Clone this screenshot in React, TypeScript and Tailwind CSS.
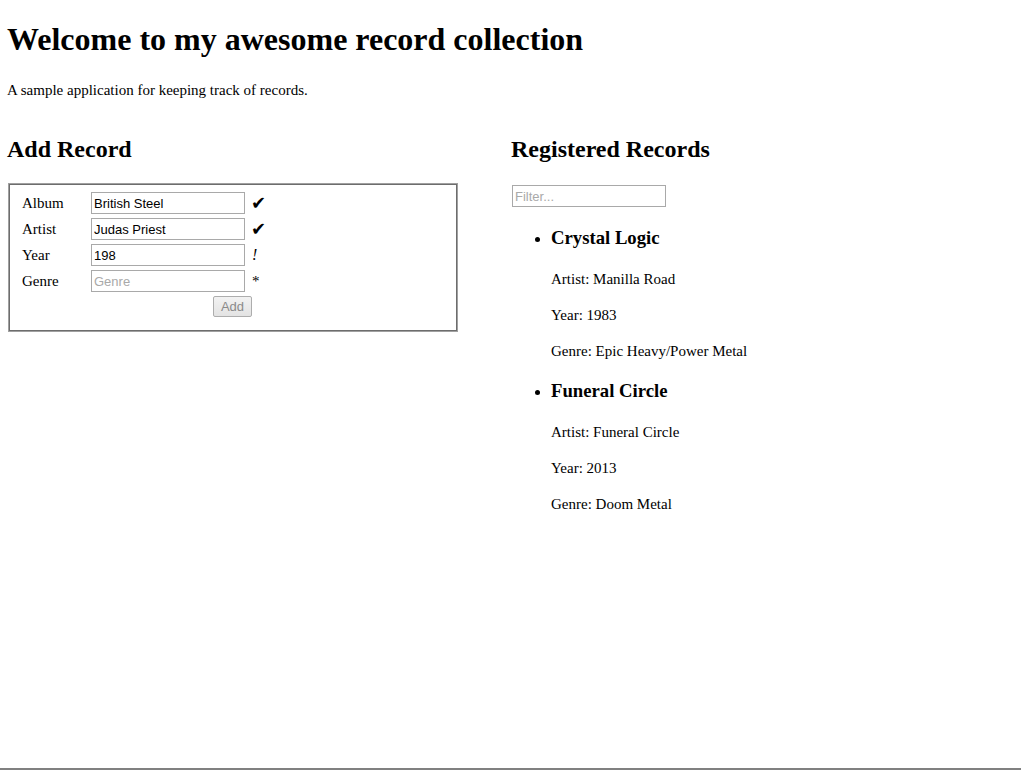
import { useState } from "react";

type RecordType = {
  album: string;
  artist: string;
  year: number;
  genre: string;
};

const records: RecordType[] = [
  { album: "Crystal Logic", artist: "Manilla Road", year: 1983, genre: "Epic Heavy/Power Metal" },
  { album: "Funeral Circle", artist: "Funeral Circle", year: 2013, genre: "Doom Metal" },
];

const inputClass =
  "w-[154px] h-[22px] border border-[#a9a9a9] bg-white px-[2px] font-['Liberation_Sans',Arial,sans-serif] text-[13px] text-black placeholder:text-[#a9a9a9] outline-none";

const App = () => {
  const [album, setAlbum] = useState("British Steel");
  const [artist, setArtist] = useState("Judas Priest");
  const [year, setYear] = useState("198");
  const [genre, setGenre] = useState("");
  const [filter, setFilter] = useState("");

  const shown = records.filter((r) =>
    r.album.toLowerCase().includes(filter.toLowerCase())
  );

  return (
    <div className="h-screen overflow-hidden border-b-2 border-[#808080] bg-white pl-[7px] pt-[21px] font-['Liberation_Serif','Times_New_Roman',serif] text-black">
      <h1 className="text-[32px] leading-[37px] font-bold">
        Welcome to my awesome record collection
      </h1>
      <p className="mt-[23px] text-[15px] leading-[18px]">
        A sample application for keeping track of records.
      </p>

      <div className="mt-[36px] grid grid-cols-[504px_1fr]">
        {/* Add record */}
        <div>
          <h2 className="text-[24px] leading-[28px] font-bold">Add Record</h2>
          <div className="mt-[20px] ml-[1px] w-[450px] border border-[#a0a0a0] pt-[8px] pb-[14px] pl-[13px] shadow-[inset_0_0_0_1px_#6d6d6d]">
            <div className="grid grid-cols-[69px_154px_auto] items-center gap-y-[4px] text-[15px] leading-[18px]">
              <span>Album</span>
              <input className={inputClass} value={album} onChange={(e) => setAlbum(e.target.value)} placeholder="Album" />
              <span className="pl-[6px] font-['DejaVu_Sans',sans-serif] text-[18px] leading-[18px]">✔</span>

              <span>Artist</span>
              <input className={inputClass} value={artist} onChange={(e) => setArtist(e.target.value)} placeholder="Artist" />
              <span className="pl-[6px] font-['DejaVu_Sans',sans-serif] text-[18px] leading-[18px]">✔</span>

              <span>Year</span>
              <input className={inputClass} value={year} onChange={(e) => setYear(e.target.value)} placeholder="Year" />
              <span className="pl-[7px] text-[16px] italic">!</span>

              <span>Genre</span>
              <input className={inputClass} value={genre} onChange={(e) => setGenre(e.target.value)} placeholder="Genre" />
              <span className="pl-[7px] text-[15px]">*</span>
            </div>
            <div className="mt-[4px] flex pl-[191px]">
              <button
                type="button"
                disabled
                className="h-[21px] w-[39px] rounded-[2px] border border-[#adadad] bg-linear-to-b from-[#f2f2f2] to-[#e3e3e3] font-['Liberation_Sans',Arial,sans-serif] text-[13px] leading-none text-[#8a8a8a]"
              >
                Add
              </button>
            </div>
          </div>
        </div>

        {/* Registered records */}
        <div>
          <h2 className="text-[24px] leading-[28px] font-bold">Registered Records</h2>
          <input
            className={`mt-[22px] ml-[1px] block ${inputClass}`}
            value={filter}
            onChange={(e) => setFilter(e.target.value)}
            placeholder="Filter..."
          />
          <ul className="mt-[20px] list-disc pl-[40px]">
            {shown.map((r, i) => (
              <li key={r.album} className={i > 0 ? "mt-[20px]" : ""}>
                <h3 className="text-[18.72px] leading-[22px] font-bold">{r.album}</h3>
                <p className="mt-[21px] text-[15px] leading-[18px]">Artist: {r.artist}</p>
                <p className="mt-[18px] text-[15px] leading-[18px]">Year: {r.year}</p>
                <p className="mt-[18px] text-[15px] leading-[18px]">Genre: {r.genre}</p>
              </li>
            ))}
          </ul>
        </div>
      </div>
    </div>
  );
};

export default App;
